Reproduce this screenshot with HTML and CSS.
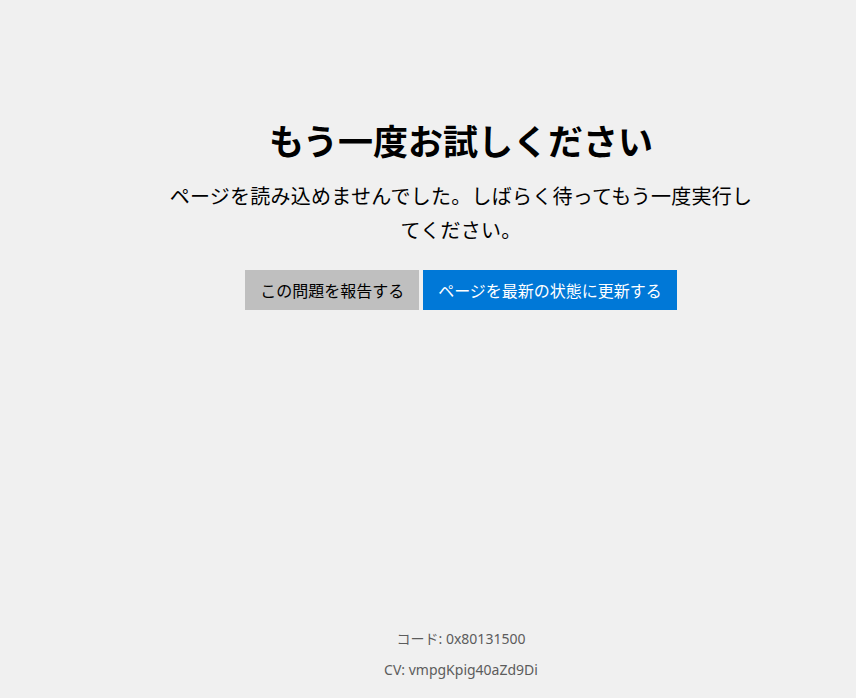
FILE: index.html
```html
<!DOCTYPE html>
<html lang="ja">
<head>
    <meta charset="UTF-8">
    <meta name="viewport" content="width=device-width, initial-scale=1.0">
    <title>エラー</title>
    <link rel="stylesheet" href="styles.css">
</head>
<body>
<div class="page">
    <div class="container">
        <h1 class="title">もう一度お試しください</h1>
        <p class="message">ページを読み込めませんでした。しばらく待ってもう一度実行してください。</p>
        <div class="button-container">
            <button type="button" class="button button-gray">この問題を報告する</button>
            <button type="button" class="button button-blue">ページを最新の状態に更新する</button>
        </div>
    </div>
    <div class="footer">
        <div class="footer-line">コード: 0x80131500</div>
        <div class="footer-line">CV: vmpgKpig40aZd9Di</div>
    </div>
</div>
</body>
</html>
```

FILE: styles.css
```css
body {
    margin: 0;
    padding: 0;
    background-color: #f0f0f0;
    font-family: "Noto Sans CJK JP", "Noto Sans", sans-serif;
    color: #000;
}

.page {
    width: 856px;
    height: 698px;
    display: flex;
    flex-direction: column;
    align-items: center;
    padding-left: 66px;
    box-sizing: border-box;
}

.container {
    width: 600px;
    margin-top: 113px;
    display: flex;
    flex-direction: column;
    align-items: center;
    text-align: center;
}

.title {
    font-size: 35px;
    font-weight: bold;
    line-height: 54px;
    margin: 0 0 12px;
}

.message {
    font-size: 20px;
    letter-spacing: 0.25px;
    line-height: 34px;
    margin: 0;
}

.button-container {
    display: flex;
    gap: 4px;
    margin-top: 23px;
}

.button {
    height: 40px;
    padding: 0 15px;
    border: none;
    font-family: inherit;
    font-size: 16px;
    cursor: pointer;
}

.button-gray {
    background-color: #bfbfbf;
    color: #000;
}

.button-blue {
    background-color: #0078d7;
    color: #fff;
}

.footer {
    margin-top: auto;
    margin-bottom: 13px;
    text-align: center;
    font-family: "Noto Sans", "Noto Sans CJK JP", sans-serif;
    font-size: 14px;
    color: #5c5c5c;
}

.footer-line {
    line-height: 31px;
}
```
